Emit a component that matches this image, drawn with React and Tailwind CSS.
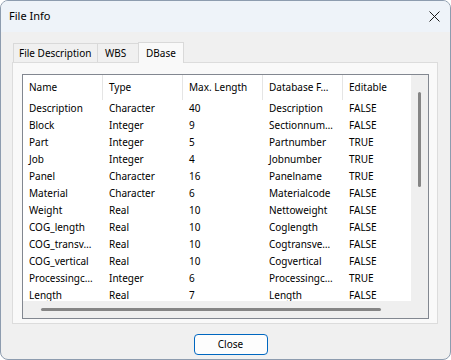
import React from 'react';

const rows = [
  ['Description', 'Character', '40', 'Description', 'FALSE'],
  ['Block', 'Integer', '9', 'Sectionnum…', 'FALSE'],
  ['Part', 'Integer', '5', 'Partnumber', 'TRUE'],
  ['Job', 'Integer', '4', 'Jobnumber', 'TRUE'],
  ['Panel', 'Character', '16', 'Panelname', 'TRUE'],
  ['Material', 'Character', '6', 'Materialcode', 'FALSE'],
  ['Weight', 'Real', '10', 'Nettoweight', 'FALSE'],
  ['COG_length', 'Real', '10', 'Coglength', 'FALSE'],
  ['COG_transv…', 'Real', '10', 'Cogtransve…', 'FALSE'],
  ['COG_vertical', 'Real', '10', 'Cogvertical', 'FALSE'],
  ['Processingc…', 'Integer', '6', 'Processingc…', 'TRUE'],
  ['Length', 'Real', '7', 'Length', 'FALSE'],
];

const headers = ['Name', 'Type', 'Max. Length', 'Database F…', 'Editable'];

const Tab = ({ label, active, className = '' }) => (
  <div
    className={`flex items-center border-t border-l border-[#d9d9d9] whitespace-nowrap ${
      active
        ? 'h-[21px] bg-[#f9f9f9] border-r px-[7px] -mb-px relative'
        : 'h-[19px] bg-[#f0f0f0] px-[5px]'
    } ${className}`}
  >
    {label}
  </div>
);

export default function App() {
  return (
    <div className="w-[451px] h-[360px] bg-[#f0f0f0] border border-[#8d9caf] rounded-[8px] overflow-hidden flex flex-col font-['Noto_Sans',sans-serif] text-black text-[10px]">
      <div className="h-[31px] shrink-0 bg-[#eef3f9] flex items-center justify-between pl-[8px] pr-[10px]">
        <span className="text-[11px] -mt-px">File Info</span>
        <svg width="11" height="11" viewBox="0 0 11 11">
          <path d="M0.5 0.5 L10.5 10.5 M10.5 0.5 L0.5 10.5" stroke="#1a1a1a" strokeWidth="1" fill="none" />
        </svg>
      </div>

      <div className="flex flex-col pl-[11px] pr-[12px] pt-[10px]">
        <div className="flex items-end h-[20px] pl-[1px]">
          <Tab label="File Description" className="w-[84px]" />
          <Tab label="WBS" className="w-[41px] pl-[7px]" />
          <Tab label="DBase" active />
        </div>

        <div className="h-[262px] border border-[#dcdcdc] bg-[#f9f9f9] pt-[11px] pl-[9px]">
          <div className="w-[407px] h-[245px] border border-[#828790] bg-white flex flex-col">
            <div className="flex h-[226px]">
              <div className="w-[388px] overflow-hidden">
                <div className="flex h-[25px] items-center">
                  {headers.map((h) => (
                    <div key={h} className="w-[80px] shrink-0 h-full flex items-center pl-[6px] border-r border-[#e5e5e5] whitespace-nowrap">
                      {h}
                    </div>
                  ))}
                </div>
                {rows.map((r) => (
                  <div key={r[0]} className="flex h-[17px] items-center">
                    {r.map((c, i) => (
                      <div key={i} className="w-[80px] shrink-0 pl-[6px] whitespace-nowrap">
                        {c}
                      </div>
                    ))}
                  </div>
                ))}
              </div>
              <div className="w-[17px] bg-[#efefef] pt-[17px] flex justify-center">
                <div className="w-[3px] h-[95px] rounded-full bg-[#858585]" />
              </div>
            </div>
            <div className="h-[17px] bg-[#efefef] pt-[7px] pl-[18px]">
              <div className="w-[340px] h-[3px] rounded-full bg-[#858585]" />
            </div>
          </div>
        </div>

        <div className="flex justify-center pt-[10px]">
          <button className="w-[74px] h-[21px] ml-[11px] rounded-[4px] border border-[#0067c0] bg-[#fdfdfd] flex items-center justify-center">
            Close
          </button>
        </div>
      </div>
    </div>
  );
}
